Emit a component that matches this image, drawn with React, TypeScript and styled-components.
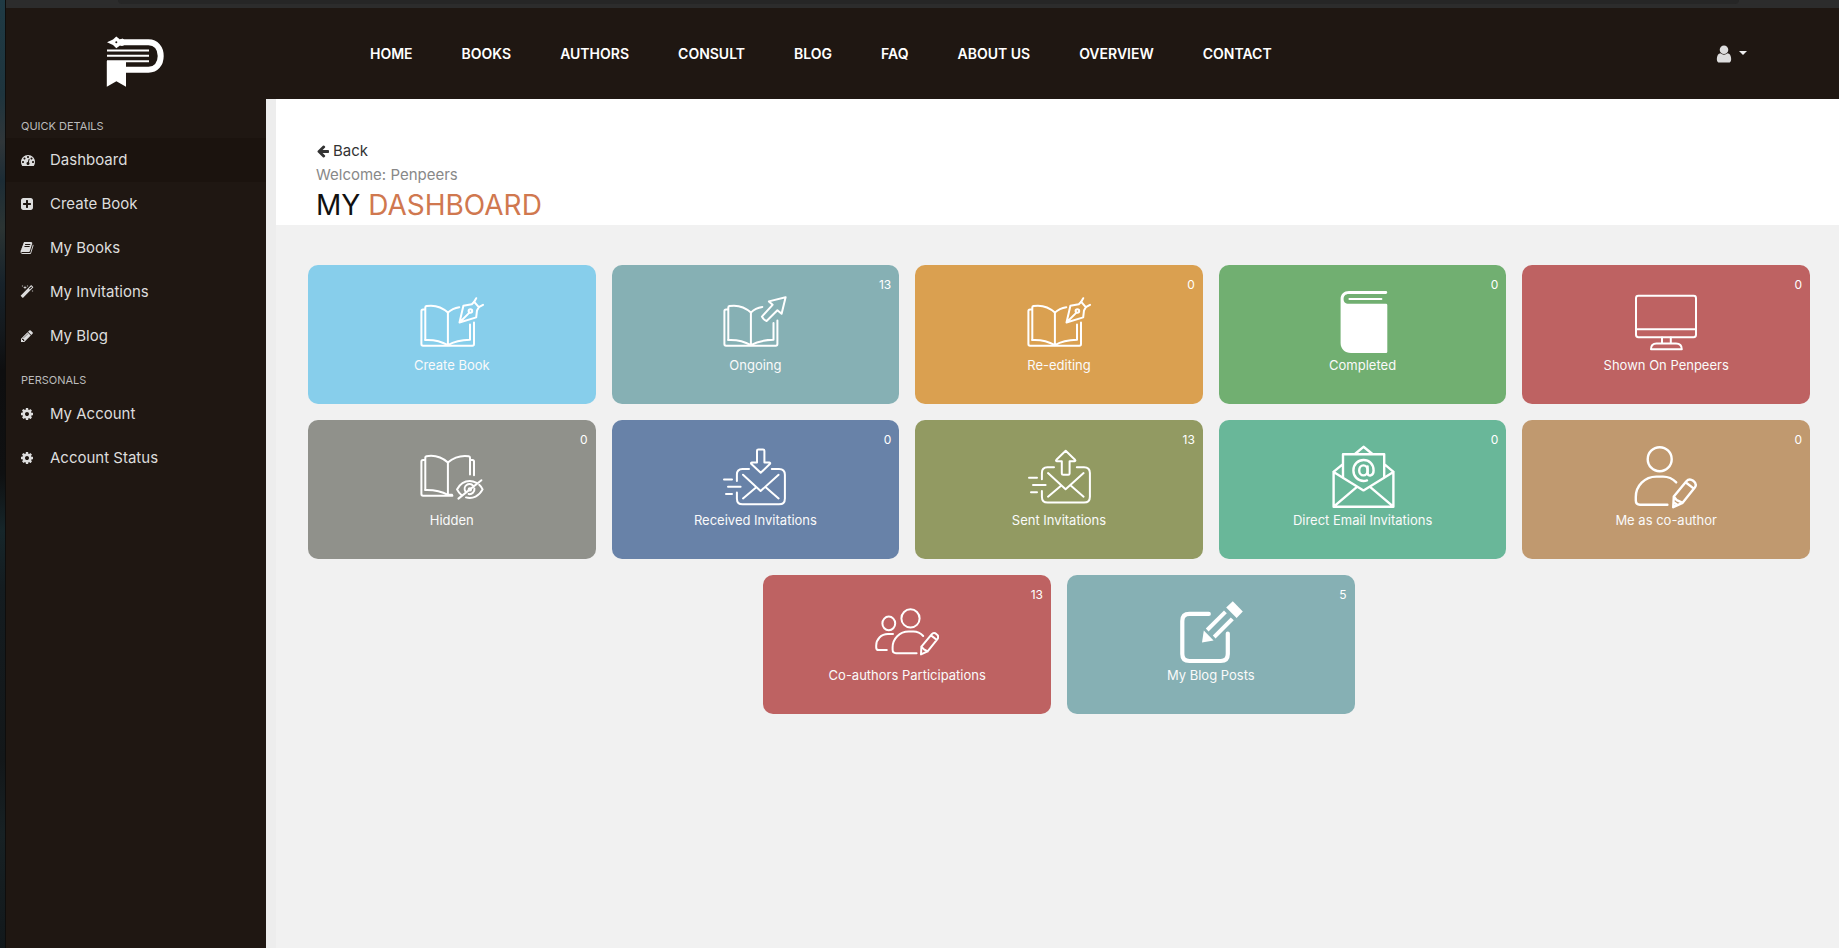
import React from "react";
import styled, { createGlobalStyle } from "styled-components";

const GlobalStyle = createGlobalStyle`
  *, *::before, *::after { box-sizing: border-box; }
  body {
    margin: 0;
    background: #f1f1f1;
    font-family: Inter, "Liberation Sans", sans-serif;
    font-size: 15px;
    line-height: 24px;
  }
  a { color: inherit; text-decoration: none; }
  ul { list-style: none; margin: 0; padding: 0; }
`;

/* ---------- frame ---------- */

const Screen = styled.div`
  display: flex;
  min-height: 100vh;
`;

const DesktopEdge = styled.div`
  flex: none;
  width: 6px;
  border-right: 1px solid #0e0d0c;
  background: linear-gradient(
    #1f3a44 0%, #1e343d 10%, #303639 15%, #1c2c35 19%, #2b3433 24%,
    #17222a 30%, #14191d 35%, #0e0e0f 39%, #0f1011 50%, #16262a 56%,
    #141c20 62%, #131719 80%, #172124 88%, #12181b 100%
  );
`;

const BrowserWindow = styled.div`
  flex: 1;
  min-width: 0;
  display: flex;
  flex-direction: column;
`;

const BrowserEdge = styled.div`
  height: 8px;
  padding: 0 100px 0 112px;
  background: #2c2c2c;
  &::before {
    content: "";
    display: block;
    height: 4px;
    border-radius: 0 0 8px 8px;
    background: #262626;
  }
`;

/* ---------- header ---------- */

const Header = styled.header`
  display: flex;
  align-items: center;
  height: 91px;
  padding: 0 92px 0 100px;
  background: #1f1712;
`;

const LogoLink = styled.a`
  display: flex;
  width: 264px;
  padding-top: 16px;
`;

const Nav = styled.nav`
  flex: 1;
  ul { display: flex; gap: 49px; }
  a {
    color: #fff;
    font-size: 14px;
    font-weight: 600;
    white-space: nowrap;
  }
`;

const UserButton = styled.button`
  display: flex;
  align-items: center;
  gap: 5px;
  padding: 0;
  border: 0;
  background: none;
  color: #ddd;
  cursor: pointer;
`;

const Caret = styled.span`
  border: 4px solid transparent;
  border-top-color: #eee;
  border-bottom: 0;
  margin-bottom: 2px;
`;

/* ---------- sidebar ---------- */

const Body = styled.div`
  flex: 1;
  display: flex;
`;

const Sidebar = styled.aside`
  flex: none;
  width: 260px;
  padding-top: 5px;
  background: #1f1712;
`;

const SectionTitle = styled.h2`
  margin: 0;
  padding: 10px 15px 0;
  color: #bbb;
  font-size: 11px;
  font-weight: 400;
  line-height: 24px;
`;

const MenuLink = styled.a<{ $active?: boolean }>`
  display: flex;
  align-items: center;
  gap: 16px;
  height: 44px;
  padding: 0 14px;
  color: #ddd;
  background: ${(p) => (p.$active ? "#1b130e" : "transparent")};
`;

/* ---------- content ---------- */

const Content = styled.main`
  flex: 1;
  min-width: 0;
  border-left: 10px solid #ededed;
  background: #f1f1f1;
`;

const PageHead = styled.section`
  padding: 40px 40px 0;
  height: 126px;
  background: #fff;
`;

const BackLink = styled.a`
  display: flex;
  align-items: center;
  gap: 3px;
  color: #333;
`;

const Welcome = styled.p`
  margin: 0;
  color: #888;
`;

const Title = styled.h1`
  margin: 0;
  color: #111;
  font-size: 28px;
  font-weight: 400;
  line-height: 36px;
  span { color: #d0784f; }
`;

const Cards = styled.ul`
  display: flex;
  flex-wrap: wrap;
  justify-content: center;
  gap: 16px;
  && { padding: 40px 29px 40px 32px; }
  li { width: calc((100% - 64px) / 5); }
`;

const Card = styled.a<{ $color: string }>`
  position: relative;
  display: flex;
  flex-direction: column;
  align-items: center;
  height: 139px;
  padding-top: 25px;
  border-radius: 10px;
  background: ${(p) => p.$color};
  color: #fff;
  font-size: 13px;
  line-height: 22px;
`;

const Count = styled.span`
  position: absolute;
  top: 9px;
  right: 8px;
  font-size: 12px;
`;

const CardArt = styled.svg`
  width: 64px;
  height: 64px;
  fill: none;
  stroke: #fff;
  stroke-width: 2;
  stroke-linecap: round;
  stroke-linejoin: round;
`;

const CardLabel = styled.span`
  color: #fafafa;
`;

const GlyphSvg = styled.svg`
  flex: none;
  fill: currentColor;
  overflow: visible;
`;

/* ---------- small glyphs ---------- */

const glyphs = {
  dashboard:
    "M384 1152q0-53-37.5-90.5t-90.5-37.5-90.5 37.5-37.5 90.5 37.5 90.5 90.5 37.5 90.5-37.5 37.5-90.5zm192-448q0-53-37.5-90.5t-90.5-37.5-90.5 37.5-37.5 90.5 37.5 90.5 90.5 37.5 90.5-37.5 37.5-90.5zm428 481l101-382q6-26-7.5-48.5t-38.5-29.5-48 6.5-30 39.5l-101 382q-60 5-107 43.5t-63 98.5q-20 77 20 146t117 89 146-20 89-117q16-60-6-117t-72-91zm660-33q0-53-37.5-90.5t-90.5-37.5-90.5 37.5-37.5 90.5 37.5 90.5 90.5 37.5 90.5-37.5 37.5-90.5zm-640-640q0-53-37.5-90.5t-90.5-37.5-90.5 37.5-37.5 90.5 37.5 90.5 90.5 37.5 90.5-37.5 37.5-90.5zm448 192q0-53-37.5-90.5t-90.5-37.5-90.5 37.5-37.5 90.5 37.5 90.5 90.5 37.5 90.5-37.5 37.5-90.5zm320 448q0 261-141 483-19 29-54 29h-1402q-35 0-54-29-141-221-141-483 0-182 71-348t191-286 286-191 348-71 348 71 286 191 191 286 71 348z",
  plus:
    "M1408 960v-128q0-26-19-45t-45-19h-320v-320q0-26-19-45t-45-19h-128q-26 0-45 19t-19 45v320h-320q-26 0-45 19t-19 45v128q0 26 19 45t45 19h320v320q0 26 19 45t45 19h128q26 0 45-19t19-45v-320h320q26 0 45-19t19-45zm256-544v960q0 119-84.5 203.5t-203.5 84.5h-960q-119 0-203.5-84.5t-84.5-203.5v-960q0-119 84.5-203.5t203.5-84.5h960q119 0 203.5 84.5t84.5 203.5z",
  book:
    "M1703 478q40 57 18 129l-275 906q-19 64-76.5 107.5t-122.5 43.5h-923q-77 0-148.5-53.5t-99.5-131.5q-24-67-2-127 0-4 3-27t4-37q1-8-3-21.5t-3-19.5q2-11 8-21t16.5-23.5 16.5-23.5q23-38 45-91.5t30-91.5q3-10 .5-30t-.5-28q3-11 17-28t17-23q21-36 42-92t25-90q1-9-2.5-32t.5-28q4-13 22-30.5t22-22.5q19-26 42.5-84.5t27.5-96.5q1-8-3-25.5t-2-26.5q2-8 9-18t18-23 17-21q8-12 16.5-30.5t15-35 16-36 19.5-32 26.5-23.5 36-11.5 47.5 5.5l-1 3q38-9 51-9h761q74 0 114 56t18 130l-274 906q-36 119-71.5 153.5t-128.5 34.5h-869q-27 0-38 15-11 16-1 43 24 70 144 70h923q29 0 56-15.5t35-41.5l300-987q7-22 5-57 38 15 59 43zm-1064 2q-4 13 2 22.5t20 9.5h608q13 0 25.5-9.5t16.5-22.5l21-64q4-13-2-22.5t-20-9.5h-608q-13 0-25.5 9.5t-16.5 22.5zm-83 256q-4 13 2 22.5t20 9.5h608q13 0 25.5-9.5t16.5-22.5l21-64q4-13-2-22.5t-20-9.5h-608q-13 0-25.5 9.5t-16.5 22.5z",
  magic:
    "M1254 581l293-293-107-107-293 293zm447-293q0 27-18 45l-1286 1286q-18 18-45 18t-45-18l-198-198q-18-18-18-45t18-45l1286-1286q18-18 45-18t45 18l198 198q18 18 18 45zm-1351-190l98 30-98 30-30 98-30-98-98-30 98-30 30-98zm350 162l196 60-196 60-60 196-60-196-196-60 196-60 60-196zm930 478l98 30-98 30-30 98-30-98-98-30 98-30 30-98zm-640-640l98 30-98 30-30 98-30-98-98-30 98-30 30-98z",
  pencil:
    "M491 1536l91-91-235-235-91 91v107h128v128h107zm523-928q0-22-22-22-10 0-17 7l-542 542q-7 7-7 17 0 22 22 22 10 0 17-7l542-542q7-7 7-17zm-54-192l416 416-832 832h-416v-416zm683 96q0 53-37 90l-166 166-416-416 166-165q36-38 90-38 53 0 91 38l235 234q37 39 37 91z",
  cog:
    "M1152 896q0-106-75-181t-181-75-181 75-75 181 75 181 181 75 181-75 75-181zm512-109v222q0 12-8 23t-20 13l-185 28q-19 54-39 91 35 50 107 138 10 12 10 25t-9 23q-27 37-99 108t-94 71q-12 0-26-9l-138-108q-44 23-91 38-16 136-29 186-7 28-36 28h-222q-14 0-24.5-8.5t-11.5-21.5l-28-184q-49-16-90-37l-141 107q-10 9-25 9-14 0-25-11-126-114-165-168-7-10-7-23 0-12 8-23 15-21 51-66.5t54-70.5q-27-50-41-99l-183-27q-13-2-21-12.5t-8-23.5v-222q0-12 8-23t19-13l186-28q14-46 39-92-40-57-107-138-10-12-10-24 0-10 9-23 26-36 98.5-107.5t94.5-71.5q13 0 26 10l138 107q44-23 91-38 16-136 29-186 7-28 36-28h222q14 0 24.5 8.5t11.5 21.5l28 184q49 16 90 37l142-107q9-9 24-9 13 0 25 10 129 119 165 170 7 8 7 22 0 12-8 23-15 21-51 66.5t-54 70.5q26 50 41 98l183 28q13 2 21 12.5t8 23.5z",
  back:
    "M1664 896v128q0 53-32.5 90.5t-84.5 37.5h-704l293 294q38 36 38 90t-38 90l-75 76q-37 37-90 37-52 0-91-37l-651-652q-37-37-37-90 0-52 37-91l651-650q38-38 91-38 52 0 90 38l75 74q38 38 38 91t-38 91l-293 293h704q52 0 84.5 37.5t32.5 90.5z",
  user:
    "M1536 1399q0 109-62.5 187t-150.5 78h-854q-88 0-150.5-78t-62.5-187q0-85 8.5-160.5t31.5-152 58.5-131 94-89 134.5-34.5q131 128 313 128t313-128q76 0 134.5 34.5t94 89 58.5 131 31.5 152 8.5 160.5zm-256-887q0 159-112.5 271.5t-271.5 112.5-271.5-112.5-112.5-271.5 112.5-271.5 271.5-112.5 271.5 112.5 112.5 271.5z",
};

type GlyphName = keyof typeof glyphs;

function Glyph({ name, size = 14 }: { name: GlyphName; size?: number }) {
  const left = name === "dashboard" ? -128 : 0;
  return (
    <GlyphSvg width={size} height={size} viewBox={`${left} 0 1792 1792`} aria-hidden="true">
      <path d={glyphs[name]} />
    </GlyphSvg>
  );
}

function Logo() {
  return (
    <svg width="60" height="52" viewBox="0 0 60 52" role="img" aria-label="Penpeers">
      <path
        d="M14 6.3H42.5C50 6.3 54.7 12 54.7 20S50 33.7 42.5 33.7H19"
        fill="none"
        stroke="#fff"
        strokeWidth="6"
      />
      <path
        fillRule="evenodd"
        fill="#fff"
        d="M1 6.3L7 3.6L10.3 .6L14 3.4L16.5 2.6L18 3.4V9.2L16 10L14 9.4L10.3 12.2L7 9ZM10.3 5.3a1 1 0 1 0 0 2a1 1 0 1 0 0-2Z"
      />
      <path d="M1 14.4H43M1 19.8H43M1 25.2H43" stroke="#fff" strokeWidth="2" />
      <path d="M.8 25H20V50.8L10.4 45.2L.8 50.8Z" fill="#fff" />
    </svg>
  );
}

/* ---------- card drawings ---------- */

const penBook = (
  <>
    <path d="M5 19.6H3q-1.6 0-1.6 1.6V54q0 1.7 1.6 1.7H52.4q1.6 0 1.6-1.7V32.4" />
    <path d="M5.3 50V17.4Q5.3 16.3 6.5 16C14 14.8 22 17 27.9 22.6C31 19.6 35 17.9 39.3 17.2" />
    <path d="M27.9 22.6V55M5.3 50C13 49.6 20 50.6 27.9 55.2C35 51 41 50 50 49.8V34.4" />
    <path d="M39.5 32.5L43.4 15.8L51.8 14.2L54.2 11.8L58.8 17.2L57 20.4L56.2 27.4ZM39.5 32.5L49.4 22.6" />
    <path d="M56.2 8.2L54.2 11.8M58.8 17.2L63 14.8" />
    <circle cx="50.4" cy="21" r="1.8" />
  </>
);

const arrowBook = (
  <>
    <path d="M5 19.6H3q-1.6 0-1.6 1.6V54q0 1.7 1.6 1.7H52.8q1.6 0 1.6-1.7V30.6" />
    <path d="M5.3 50V17.4Q5.3 16.3 6.5 16C14 14.8 22 17 27.9 22.6C31 19.4 35 17.6 39.3 17" />
    <path d="M27.9 22.6V55M5.3 50C13 49.6 20 50.6 27.9 55.2C35 51 41 50 50.5 49.8V33" />
    <path d="M62.6 7.2L45.9 11.4L49.6 14.8L38.9 26.6Q40.4 29.6 43.6 31L54.4 20.2L58.6 23.8Z" />
  </>
);

const closedBook = (
  <path
    stroke="none"
    fill="#fff"
    fillRule="evenodd"
    d="M18 1H54.8a1.4 1.4 0 0 1 0 2.9H18C14 3.9 12.6 6 12.6 9S14 13.8 18 13.8H55q1.3 0 1.3 1.3V61.8q0 1.2-1.2 1.2H20C14 63 9.6 59 9.6 53V9C9.6 4 13 1 18 1ZM18.4 8H50.4a1 1 0 0 1 0 2H18.4a1 1 0 0 1 0-2Z"
  />
);

const monitor = (
  <>
    <rect x="2" y="5.8" width="60" height="41.4" rx="2.4" />
    <path d="M2 39.2H62M28 47.4V53M36.8 47.4V53" />
    <path d="M17 59.2C16.8 55.6 19 53.4 22.4 53.4H42C45.6 53.4 47.8 55.6 47.8 59.2Z" />
  </>
);

const hiddenBook = (
  <>
    <path d="M5 15H3q-1.6 0-1.6 1.6V49q0 1.7 1.6 1.7H32.4" />
    <path d="M5.3 45V12.6Q5.3 11.5 6.5 11.2C14 10 22 12.2 27.9 17.6C34 12.2 41 10.2 48.6 11.2Q50 11.4 50 12.8V29.6" />
    <path d="M27.9 17.6V50M5.3 45C13 44.8 21 46 27.9 49.8H32M50.4 15H52.4q1.6 0 1.6 1.6V30.2" />
    <path d="M56.6 37.8C53.8 36.4 51.6 36 49.8 36C43.6 36 39.6 39.6 37 44.4C38 46.4 39.6 48.4 41.4 50" />
    <path d="M46 52.4C52.8 54.2 59.2 51 62.6 44.4C61.6 42.4 60.6 41 59.2 39.8" />
    <path d="M53 40.6A4.8 4.8 0 0 0 45.4 46.4M54.4 43.6A4.8 4.8 0 0 1 48.6 49M61.4 35.2L38.4 53.6" />
    <circle cx="49.8" cy="44.4" r="1.2" />
  </>
);

const mailBase = (
  <>
    <path d="M26 24H19.4Q13.9 24 13.9 29.6V36M48.8 24H56Q61.9 24 61.9 29.8V53.4Q61.9 59.3 56 59.3H19.6Q13.9 59.3 13.9 53.4V47.6" />
    <path d="M1 34.4H9M5 41.7H17.6M3 49H9" />
    <path d="M20 29.8L37.6 46L55.6 29.8M20 53.4L33 42.4M55.6 53.4L43 42.4" />
  </>
);

const mailIn = (
  <>
    {mailBase}
    <path d="M34 17.6V5.8Q34 4.4 35.4 4.4H40Q41.4 4.4 41.4 5.8V17.6H46.4Q47.8 17.8 46.8 19L37.7 27.8L28.4 19Q27.4 17.8 28.8 17.6Z" />
  </>
);

const mailOut = (
  <>
    <g transform="translate(1 -1.7)">{mailBase}</g>
    <path d="M34.8 16.2V28.4Q34.8 29.8 36.2 29.8H41.2Q42.6 29.8 42.6 28.4V16.2H47.6Q49 16 48 14.8L38.7 5.8L29.4 14.8Q28.4 16 29.8 16.2Z" />
  </>
);

const atMail = (
  <g strokeWidth="2.4">
    <path d="M2.6 27V61.8H62.4V27L32.5 45.4ZM3 61.4L26 41.8M62 61.4L39 41.8" />
    <path d="M12 32V9.2H53.2V32M24 9L32.5 1.8L41.4 9M2.8 26.6L11.6 19.4M62.2 26.6L53.6 19.4" />
    <path d="M36.6 21.4V28.4C36.8 32 42.6 31 42.6 25.4C42.6 19 38.2 15 32.6 15S22.4 19.4 22.4 25.4S26.8 36 32.6 36Q34.4 36 36 35.4" />
    <ellipse cx="32.4" cy="25.4" rx="4.2" ry="5" />
  </g>
);

const author = (
  <g strokeWidth="2.4">
    <circle cx="25.7" cy="14.2" r="12" />
    <path d="M42.2 37.4C38.6 33.6 34 31.6 29 31.6H22.4C10.6 31.6 1.8 41 1.8 52V55.6Q1.8 59.8 6 59.8H33.4" />
    <path d="M39.2 62.2L39.8 51.6L52.4 36.2Q55.4 32.8 59.2 35.8Q63.4 39 60.8 42.6L48.6 57.8ZM51.6 37.2L59.8 43.6M39.8 51.6L42.8 55.2L48.6 57.8M40 57.6L43.6 60" />
  </g>
);

const authors = (
  <>
    <circle cx="35.5" cy="18.4" r="9.1" />
    <ellipse cx="13.8" cy="23.4" rx="6.4" ry="6.8" />
    <path d="M48.2 36C45.6 33.2 42 31.6 38.4 31.6H33.8C24.6 31.6 17.6 38.6 17.6 47.4V49.6Q17.6 53.2 21 53.2H41.6" />
    <path d="M18 34H13C6 34 1.2 39.4 1.2 45.6V47.4Q1.2 50 3.8 50H11.8" />
    <path d="M46 54.4L46.4 46.6L56.6 34.4Q58.8 31.8 61.6 34.2Q64.4 36.4 62.4 39.2L52.6 51.4ZM56 35.4L61.6 39.8M46.4 46.6L49 49.4L52.6 51.4" />
  </>
);

const compose = (
  <>
    <path strokeWidth="4.2" d="M29.8 13.9H10.4Q3.3 13.9 3.3 21V54Q3.3 61 10.4 61H41.8Q48.8 61 48.8 54V33.6" />
    <g fill="#fff" stroke="none">
      <path d="M23 42.4L24.8 30.6L34.6 40.4Z" />
      <path d="M26.8 28.6L45 10.4L47.8 13.2L29.6 31.4Z" />
      <path d="M33.8 35.4L51.8 17.4L54.8 20.2L36.6 38.4Z" />
      <path d="M53.8 1.2L63.8 11.6L57.6 18L47.2 7.6Z" />
    </g>
  </>
);

/* ---------- data ---------- */

const navItems = ["HOME", "BOOKS", "AUTHORS", "CONSULT", "BLOG", "FAQ", "ABOUT US", "OVERVIEW", "CONTACT"];

const menu: { title: string; items: { label: string; icon: GlyphName; active?: boolean }[] }[] = [
  {
    title: "QUICK DETAILS",
    items: [
      { label: "Dashboard", icon: "dashboard", active: true },
      { label: "Create Book", icon: "plus" },
      { label: "My Books", icon: "book" },
      { label: "My Invitations", icon: "magic" },
      { label: "My Blog", icon: "pencil" },
    ],
  },
  {
    title: "PERSONALS",
    items: [
      { label: "My Account", icon: "cog" },
      { label: "Account Status", icon: "cog" },
    ],
  },
];

const cards: { label: string; color: string; art: React.ReactNode; count?: number }[] = [
  { label: "Create Book", color: "#87ceeb", art: penBook },
  { label: "Ongoing", color: "#86b0b4", art: arrowBook, count: 13 },
  { label: "Re-editing", color: "#daa050", art: penBook, count: 0 },
  { label: "Completed", color: "#71af71", art: closedBook, count: 0 },
  { label: "Shown On Penpeers", color: "#be6262", art: monitor, count: 0 },
  { label: "Hidden", color: "#90918b", art: hiddenBook, count: 0 },
  { label: "Received Invitations", color: "#6882a8", art: mailIn, count: 0 },
  { label: "Sent Invitations", color: "#929a62", art: mailOut, count: 13 },
  { label: "Direct Email Invitations", color: "#69b799", art: atMail, count: 0 },
  { label: "Me as co-author", color: "#c0996f", art: author, count: 0 },
  { label: "Co-authors Participations", color: "#be6262", art: authors, count: 13 },
  { label: "My Blog Posts", color: "#86b0b4", art: compose, count: 5 },
];

export default function App() {
  return (
    <Screen>
      <GlobalStyle />
      <DesktopEdge />
      <BrowserWindow>
        <BrowserEdge />
        <Header>
          <LogoLink href="#"><Logo /></LogoLink>
          <Nav>
            <ul>
              {navItems.map((item) => (
                <li key={item}><a href="#">{item}</a></li>
              ))}
            </ul>
          </Nav>
          <UserButton type="button" aria-label="Account menu">
            <Glyph name="user" size={20} />
            <Caret />
          </UserButton>
        </Header>
        <Body>
          <Sidebar>
            {menu.map((section) => (
              <nav key={section.title} aria-label={section.title}>
                <SectionTitle>{section.title}</SectionTitle>
                <ul>
                  {section.items.map((item) => (
                    <li key={item.label}>
                      <MenuLink href="#" $active={item.active}>
                        <Glyph name={item.icon} />
                        {item.label}
                      </MenuLink>
                    </li>
                  ))}
                </ul>
              </nav>
            ))}
          </Sidebar>
          <Content>
            <PageHead>
              <BackLink href="#">
                <Glyph name="back" />
                Back
              </BackLink>
              <Welcome>Welcome: Penpeers</Welcome>
              <Title>MY <span>DASHBOARD</span></Title>
            </PageHead>
            <Cards>
              {cards.map((card) => (
                <li key={card.label}>
                  <Card href="#" $color={card.color}>
                    {card.count !== undefined && <Count>{card.count}</Count>}
                    <CardArt viewBox="0 0 64 64" aria-hidden="true">{card.art}</CardArt>
                    <CardLabel>{card.label}</CardLabel>
                  </Card>
                </li>
              ))}
            </Cards>
          </Content>
        </Body>
      </BrowserWindow>
    </Screen>
  );
}
